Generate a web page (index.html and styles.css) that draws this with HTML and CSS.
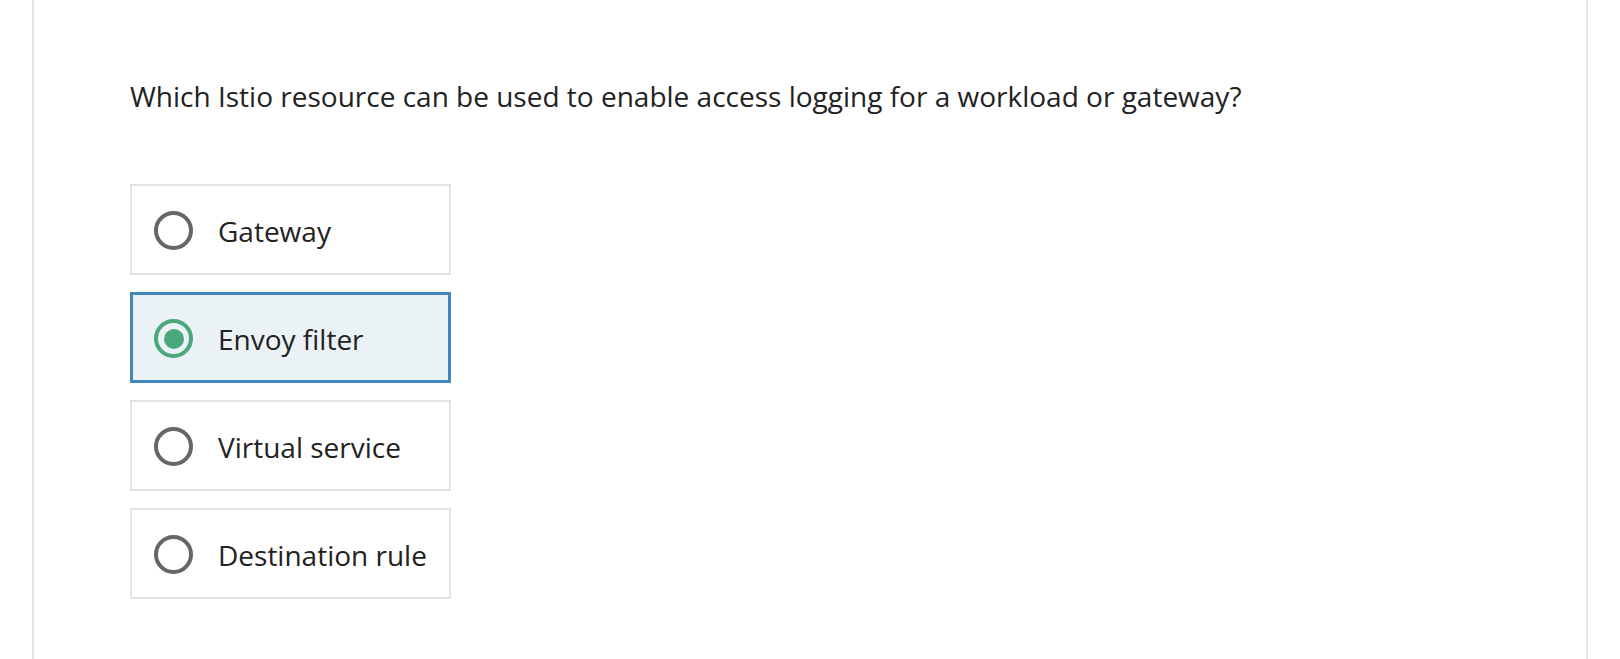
FILE: index.html
```html
<!DOCTYPE html>
<html lang="en">
<head>
<meta charset="utf-8">
<title>Quiz question</title>
<link rel="stylesheet" href="styles.css">
</head>
<body>
<main class="panel">
  <p class="question">Which Istio resource can be used to enable access logging for a workload or gateway?</p>
  <ul class="options">
    <li class="option"><span class="radio"></span><span class="label">Gateway</span></li>
    <li class="option selected"><span class="radio"></span><span class="label">Envoy filter</span></li>
    <li class="option"><span class="radio"></span><span class="label">Virtual service</span></li>
    <li class="option"><span class="radio"></span><span class="label">Destination rule</span></li>
  </ul>
</main>
</body>
</html>
```

FILE: styles.css
```css
html, body {
  margin: 0;
  padding: 0;
  background: #ffffff;
}
body {
  font-family: "Open Sans", "Noto Sans", sans-serif;
  color: #222222;
  height: 659px;
  overflow: hidden;
}
.panel {
  margin-left: 32px;
  width: 1556px;
  height: 659px;
  border-left: 2px solid #e2e2e2;
  border-right: 2px solid #e2e2e2;
  padding: 76px 0 0 96px;
  box-sizing: border-box;
}
.question {
  margin: 0;
  font-size: 28px;
  line-height: 40px;
  letter-spacing: 0;
}
.options {
  list-style: none;
  margin: 68px 0 0 0;
  padding: 0;
  display: flex;
  flex-direction: column;
  gap: 17px;
}
.option {
  width: 321px;
  height: 91px;
  box-sizing: border-box;
  border: 2px solid #e3e3e3;
  display: flex;
  align-items: center;
  padding: 2px 0 0 22px;
  gap: 25px;
  background: #ffffff;
}
.option.selected {
  border: 3px solid #4287bc;
  background: #eaf2f5;
  padding-left: 21px;
}
.radio {
  width: 39px;
  height: 39px;
  box-sizing: border-box;
  border: 4px solid #666666;
  border-radius: 50%;
  display: flex;
  align-items: center;
  justify-content: center;
  flex: none;
}
.selected .radio {
  border-color: #4aa87c;
}
.selected .radio::after {
  content: "";
  width: 20px;
  height: 20px;
  border-radius: 50%;
  background: #4aa87c;
}
.label {
  font-size: 28px;
  line-height: 36px;
  color: #222222;
}
```
